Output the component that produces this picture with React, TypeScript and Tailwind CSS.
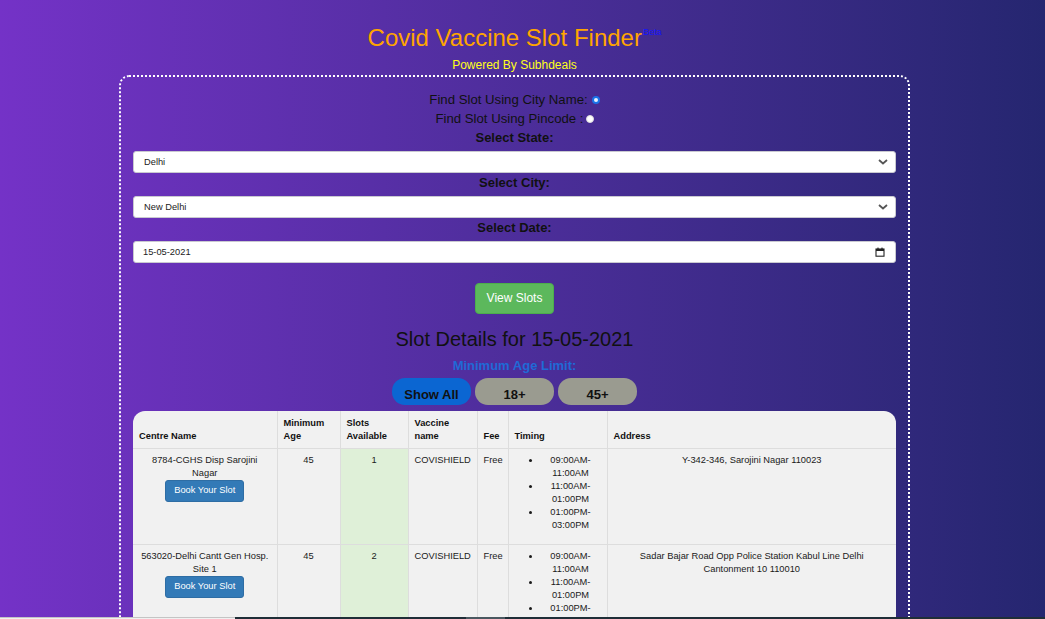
import { useState } from 'react'

const timings = ['09:00AM-11:00AM', '11:00AM-01:00PM', '01:00PM-03:00PM']

const centres = [
  {
    name: '8784-CGHS Disp Sarojini Nagar',
    age: 45,
    slots: 1,
    vaccine: 'COVISHIELD',
    fee: 'Free',
    address: 'Y-342-346, Sarojini Nagar 110023',
  },
  {
    name: '563020-Delhi Cantt Gen Hosp. Site 1',
    age: 45,
    slots: 2,
    vaccine: 'COVISHIELD',
    fee: 'Free',
    address: 'Sadar Bajar Road Opp Police Station Kabul Line Delhi Cantonment 10 110010',
  },
]

const ageFilters = ['Show All', '18+', '45+']

function Chevron() {
  return (
    <svg className="absolute right-[7px] top-1/2 -translate-y-1/2 pointer-events-none" width="10" height="6" viewBox="0 0 10 6">
      <path d="M1 1l4 3.5L9 1" fill="none" stroke="#555" strokeWidth="1.8" />
    </svg>
  )
}

function CalendarIcon() {
  return (
    <svg className="absolute right-[10px] top-1/2 -translate-y-1/2 pointer-events-none" width="10" height="10" viewBox="0 0 10 10">
      <rect x="1" y="2" width="8" height="7.2" fill="none" stroke="#222" strokeWidth="1.1" />
      <rect x="1" y="2" width="8" height="2" fill="#222" />
      <rect x="2.4" y="0.6" width="1.2" height="2" fill="#222" />
      <rect x="6.4" y="0.6" width="1.2" height="2" fill="#222" />
    </svg>
  )
}

function FakeSelect({ value }: { value: string }) {
  return (
    <div className="relative h-[22px] rounded-[3px] border border-[#c9c9d0] bg-white text-left">
      <span className="block pl-[10px] text-[9.3px] leading-[20px] text-[#222]">{value}</span>
      <Chevron />
    </div>
  )
}

function Label({ children }: { children: React.ReactNode }) {
  return <div className="mb-[4px] text-[13px] font-bold leading-[19px] text-[#111]">{children}</div>
}

export default function App() {
  const [mode] = useState<'city' | 'pin'>('city')
  const [age, setAge] = useState('Show All')

  return (
    <div className="min-h-screen bg-linear-to-r from-[#7432c7] to-[#252670] font-['Liberation_Sans',Arial,sans-serif]">
      <div className="pr-4 pt-[22px] text-center">
        <h1 className="text-[24px] leading-[32px] text-[#ffa500]">
          Covid Vaccine Slot Finder
          <sup className="relative -top-[11px] ml-[1px] text-[9px] text-[#1414ff]">Beta</sup>
        </h1>
        <p className="mt-[4px] text-[12px] leading-[14px] text-[#ffff1a]">Powered By Subhdeals</p>

        <div className="mx-auto mt-[3px] w-[791px] rounded-[10px] border-2 border-dotted border-white px-[12px] pt-[13px]">
          <div className="text-[13.2px] leading-[19px] text-[#111]">
            <div className="flex items-center justify-center">
              Find Slot Using City Name:
              <span className={`ml-[4px] inline-block h-[8px] w-[8px] rounded-full ${mode === 'city' ? 'border-[2px] border-[#1a73e8] bg-[#e8f0fe]' : 'border border-[#bbb] bg-white'}`} />
            </div>
            <div className="flex items-center justify-center">
              Find Slot Using Pincode :
              <span className="ml-[2px] inline-block h-[8px] w-[8px] rounded-full border border-[#ddd] bg-white" />
            </div>
          </div>

          <Label>Select State:</Label>
          <FakeSelect value="Delhi" />
          <Label>Select City:</Label>
          <FakeSelect value="New Delhi" />
          <Label>Select Date:</Label>
          <div className="relative h-[22px] rounded-[3px] border border-[#c9c9d0] bg-white text-left">
            <span className="block pl-[9px] text-[9.3px] leading-[20px] text-[#222]">15-05-2021</span>
            <CalendarIcon />
          </div>

          <button className="mt-[20px] h-[31px] rounded-[4px] border border-[#4cae4c] bg-[#5cb85c] px-[11px] text-[12px] leading-[15px] text-white">
            View Slots
          </button>

          <h2 className="mt-[13px] text-[20px] leading-[24px] text-[#111]">Slot Details for 15-05-2021</h2>
          <div className="mt-[6px] text-[13px] font-bold leading-[18px] text-[#1f6ad6]">Minimum Age Limit:</div>

          <div className="mt-[3px] flex justify-center gap-[4px]">
            {ageFilters.map((f) => (
              <button
                key={f}
                onClick={() => setAge(f)}
                className={`h-[27px] w-[79px] rounded-[13px] pt-[7px] text-[13px] font-bold text-[#111] ${age === f ? 'bg-[#0b66d2]' : 'bg-[#9a9b90]'}`}
              >
                {f}
              </button>
            ))}
          </div>

          <div className="mt-[6px] overflow-hidden rounded-t-[12px] bg-[#f1f1f1]">
            <table className="w-full table-fixed border-collapse text-[9.3px] leading-[13px] text-[#1a1a1a]">
              <colgroup>
                <col className="w-[144px]" />
                <col className="w-[63px]" />
                <col className="w-[68px]" />
                <col className="w-[69px]" />
                <col className="w-[31px]" />
                <col className="w-[99px]" />
                <col className="w-[289px]" />
              </colgroup>
              <thead>
                <tr className="border-b border-[#dddddd]">
                  {['Centre Name', 'Minimum Age', 'Slots Available', 'Vaccine name', 'Fee', 'Timing', 'Address'].map((h, i) => (
                    <th
                      key={h}
                      className={`h-[37px] px-[6px] pb-[5px] pt-[5px] text-left align-bottom font-bold text-[#111] ${i > 0 ? 'border-l border-[#dddddd]' : ''}`}
                    >
                      {h}
                    </th>
                  ))}
                </tr>
              </thead>
              <tbody>
                {centres.map((c) => (
                  <tr key={c.name} className="border-b border-[#dddddd]">
                    <td className="h-[96px] px-[6px] pt-[5px] align-top text-center">
                      <div>{c.name}</div>
                      <button className="h-[22px] rounded-[3px] border border-[#2e6da4] bg-[#337ab7] px-[8px] text-[9.3px] text-white">
                        Book Your Slot
                      </button>
                    </td>
                    <td className="border-l border-[#dddddd] px-[6px] pt-[5px] align-top text-center">{c.age}</td>
                    <td className="border-l border-[#dddddd] bg-[#dff0d8] px-[6px] pt-[5px] align-top text-center">{c.slots}</td>
                    <td className="border-l border-[#dddddd] px-[6px] pt-[5px] align-top">{c.vaccine}</td>
                    <td className="border-l border-[#dddddd] px-[6px] pt-[5px] align-top">{c.fee}</td>
                    <td className="border-l border-[#dddddd] px-[6px] pt-[5px] align-top">
                      <ul className="mb-[6px] list-disc pl-[26px] text-center">
                        {timings.map((t) => (
                          <li key={t}>{t}</li>
                        ))}
                      </ul>
                    </td>
                    <td className="border-l border-[#dddddd] px-[6px] pt-[5px] align-top text-center">{c.address}</td>
                  </tr>
                ))}
              </tbody>
            </table>
          </div>
        </div>
      </div>

      <div className="fixed bottom-0 left-0 right-0 flex h-[2px]">
        <div className="w-[235px] border-t border-[#c4c4c4] bg-[#f0f0f0]" />
        <div className="flex flex-1 bg-[#1f2e37]">
          <div className="ml-[231px] w-[39px] bg-[#4a5860]" />
        </div>
      </div>
    </div>
  )
}
